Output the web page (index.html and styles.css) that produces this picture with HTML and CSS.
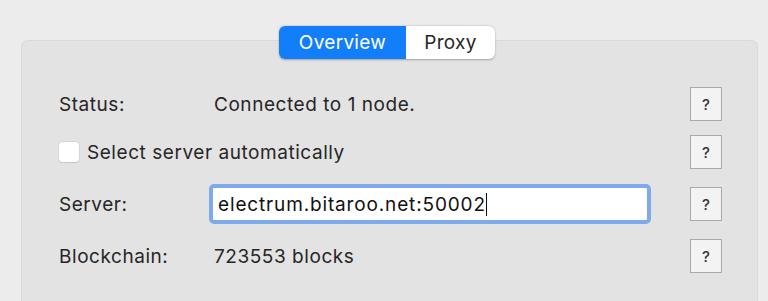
FILE: index.html
```html
<!DOCTYPE html>
<html>
<head>
<meta charset="utf-8">
<link rel="stylesheet" href="styles.css">
</head>
<body>
<div class="window">
  <div class="tabs">
    <div class="tab active">Overview</div>
    <div class="tab">Proxy</div>
  </div>
  <div class="panel">
    <div class="row row-status">
      <div class="label">Status:</div>
      <div class="value">Connected to 1 node.</div>
      <div class="help">?</div>
    </div>
    <div class="row row-check">
      <label class="check"><span class="box"></span><span>Select server automatically</span></label>
      <div class="help">?</div>
    </div>
    <div class="row row-server">
      <div class="label">Server:</div>
      <div class="input">electrum.bitaroo.net:50002<span class="caret"></span></div>
      <div class="help">?</div>
    </div>
    <div class="row row-chain">
      <div class="label">Blockchain:</div>
      <div class="value">723553 blocks</div>
      <div class="help">?</div>
    </div>
  </div>
</div>
</body>
</html>
```
FILE: styles.css
```css
* { box-sizing: border-box; }
html, body { margin: 0; padding: 0; background: #ececec; overflow: hidden; }
body { width: 768px; height: 301px; font-family: "Inter", "Liberation Sans", sans-serif; color: #262626; font-size: 19px; letter-spacing: 0.55px; }
.window { position: relative; padding: 40px 10px 0 21px; height: 301px; overflow: hidden; }
.tabs {
  position: absolute; left: 279px; top: 26px; height: 33px; display: flex;
  background: #fff; border-radius: 6px; box-shadow: 0 0.5px 2px rgba(0,0,0,0.3);
  z-index: 2; overflow: hidden;
}
.tab { line-height: 33px; font-size: 19px; color: #262626; letter-spacing: 0.3px; }
.tab.active { background: #127ef9; color: #fff; width: 127px; text-align: center; }
.tab:last-child { width: 89px; text-align: center; }
.panel {
  width: 737px; height: 261px; background: #e3e3e3; border: 1px solid #dadada; border-bottom: none;
  border-radius: 7px 7px 0 0; padding: 46px 0 0 37px;
}
.row { display: flex; align-items: center; height: 34px; margin-bottom: 14px; }
.row-check { margin-bottom: 15px; }
.row-server { height: 40px; margin-bottom: 15px; }
.label { width: 155px; flex-shrink: 0; }
.value { flex: 1; }
.check { display: flex; align-items: center; flex: 1; }
.box { width: 20px; height: 20px; background: #fff; border-radius: 4px; box-shadow: 0 0 0 0.5px #c9c9c9, 0 0.5px 1px rgba(0,0,0,0.15); margin-right: 8px; flex-shrink: 0; }
.input {
  width: 442px; flex-shrink: 0; height: 40px; margin-left: -5px; background: #fff;
  border: 4px solid #7daaea; border-radius: 5px; padding-left: 5px;
  display: flex; align-items: center; color: #111; letter-spacing: 0.85px;
}
.caret { display: inline-block; width: 1px; height: 23px; background: #111; margin-left: 0; }
.help {
  width: 32px; height: 34px; margin-left: auto; margin-right: 35px; flex-shrink: 0;
  border: 1px solid #a9a9a9; background: #f3f3f3; font-size: 15px; font-weight: 500; letter-spacing: 0;
  display: flex; align-items: center; justify-content: center; color: #333;
}
```
